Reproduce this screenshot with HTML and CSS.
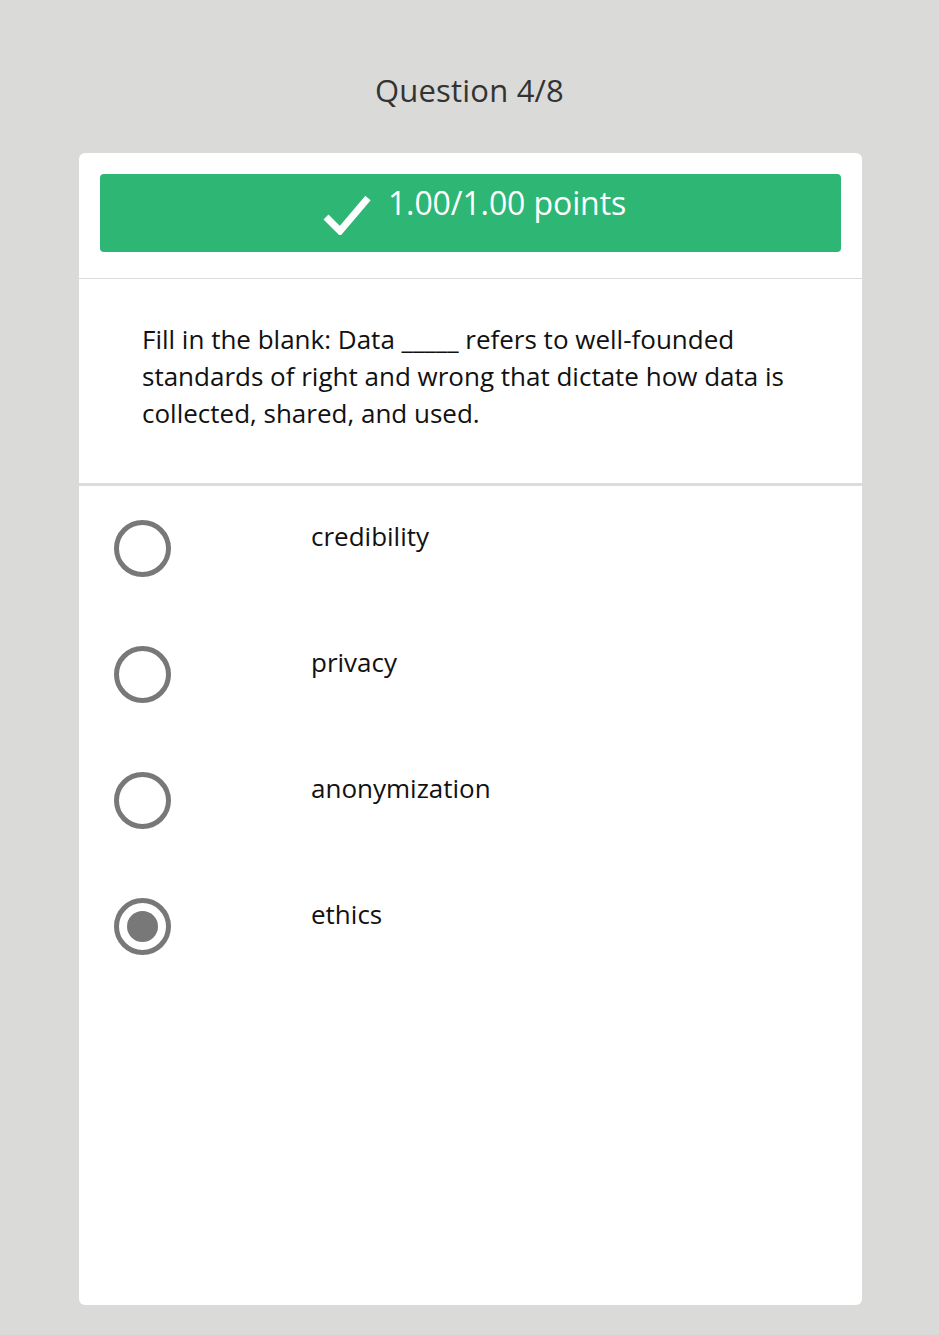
FILE: index.html
```html
<!DOCTYPE html>
<html>
<head>
<meta charset="utf-8">
<link rel="stylesheet" href="styles.css">
</head>
<body>
<div class="page">
  <h1 class="title">Question 4/8</h1>
  <div class="card">
    <div class="banner-wrap">
      <div class="banner">
        <svg class="check" width="48" height="40" viewBox="0 0 48 40"><path d="M3 22 L17 36 L45 3" fill="none" stroke="#fff" stroke-width="7"/></svg>
        <span class="score">1.00/1.00 points</span>
      </div>
    </div>
    <div class="question">Fill in the blank: Data _____ refers to well-founded standards of right and wrong that dictate how data is collected, shared, and used.</div>
    <div class="options">
      <div class="option"><span class="radio"></span><span class="label">credibility</span></div>
      <div class="option"><span class="radio"></span><span class="label">privacy</span></div>
      <div class="option"><span class="radio"></span><span class="label">anonymization</span></div>
      <div class="option"><span class="radio checked"></span><span class="label">ethics</span></div>
    </div>
  </div>
</div>
</body>
</html>
```
FILE: styles.css
```css
html, body { margin: 0; padding: 0; }
body {
  background: #dadad8;
  font-family: "Open Sans", "Noto Sans", sans-serif;
  width: 939px;
  height: 1335px;
}
.page { padding-top: 68px; display: flex; flex-direction: column; align-items: center; }
.title {
  margin: 0;
  font-weight: 400;
  font-size: 31px;
  line-height: 44px;
  color: #333;
  text-align: center;
  letter-spacing: 0.2px;
}
.card {
  margin-top: 41px;
  width: 783px;
  height: 1152px;
  background: #fff;
  border-radius: 6px;
  display: flex;
  flex-direction: column;
  margin-left: 2px;
}
.banner-wrap { padding: 21px 21px 26px; border-bottom: 1px solid #dddddd; }
.banner {
  height: 78px;
  background: #2db674;
  border-radius: 4px;
  display: flex;
  justify-content: center;
  align-items: flex-start;
  gap: 17px;
  padding-left: 8px;
  box-sizing: border-box;
}
.check { margin-top: 21px; }
.score {
  color: #fff;
  font-size: 32px;
  line-height: 44px;
  margin-top: 7px;
  letter-spacing: -0.1px;
}
.question {
  padding: 42px 60px 51px 63px;
  font-size: 26px;
  line-height: 37px;
  color: #111;
  border-bottom: 3px solid #dcdcdc;
}
.options { padding-top: 34px; padding-left: 35px; }
.option { display: flex; align-items: flex-start; height: 126px; }
.radio {
  width: 57px;
  height: 57px;
  box-sizing: border-box;
  border: 5px solid #787878;
  border-radius: 50%;
  flex: none;
  position: relative;
}
.radio.checked::after {
  content: "";
  position: absolute;
  left: 8px; top: 8px;
  width: 31px; height: 31px;
  border-radius: 50%;
  background: #787878;
}
.label {
  margin-left: 140px;
  margin-top: -2px;
  font-size: 26px;
  line-height: 36px;
  color: #111;
}
```
